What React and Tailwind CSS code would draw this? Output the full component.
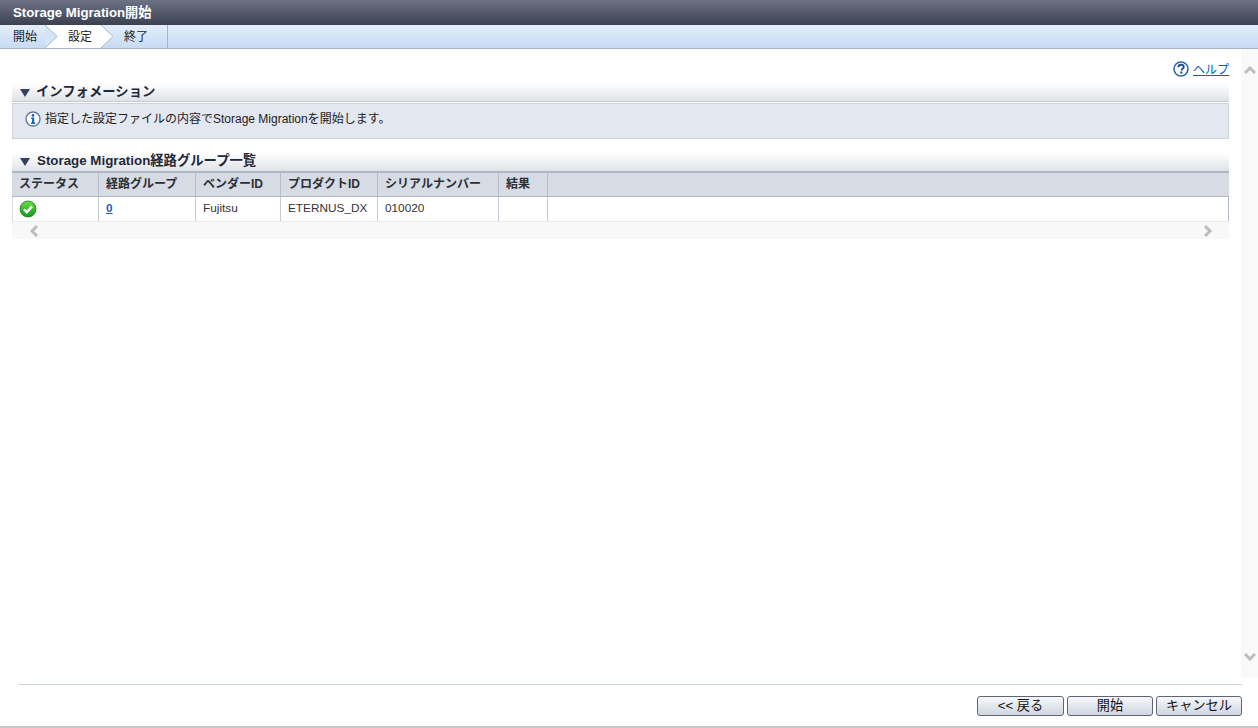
const font = "font-['Liberation_Sans','Noto_Sans_CJK_JP',sans-serif]";

function SectionHeader({ children, textGap, line, lift }) {
  return (
    <div className={`flex h-[18px] shrink-0 items-center bg-gradient-to-b from-white to-[#dfe2e7] pl-[8px] text-[13.33px] font-bold leading-[18px] text-[#1f2937] ${line ? "box-content border-b border-[#c6cad0]" : ""} ${lift ? "pb-[2px]" : ""}`}>
      <svg width="10" height="8" viewBox="0 0 10 8" className="mt-[1px]" style={{ marginRight: textGap }}>
        <path d="M0 0h10L5 8z" fill="#33415c" />
      </svg>
      <span>{children}</span>
    </div>
  );
}

function Arrow({ fromActive, toActive }) {
  return (
    <svg width="12" height="23" viewBox="0 0 12 23" className="block shrink-0">
      <rect width="12" height="23" fill={toActive ? "#fff" : "transparent"} />
      <path d="M0 0L12 11.5L0 23z" fill={fromActive ? "#fff" : "#d6e5f6"} />
      <path d="M0 0L12 11.5L0 23" fill="none" stroke="#a9b7c6" strokeWidth="1" />
    </svg>
  );
}

function Th({ w, children, grow }) {
  return (
    <div
      className={`flex h-full shrink-0 items-center border-r border-[#b4bdca] pb-[2px] pl-[7px] text-[12px] font-bold text-[#2b2f36] ${grow ? "grow border-r-0" : ""}`}
      style={grow ? undefined : { width: w }}
    >
      {children}
    </div>
  );
}

function Td({ w, children, grow }) {
  return (
    <div
      className={`flex h-full shrink-0 items-center border-r border-[#c4cbd6] pl-[7px] text-[11.8px] text-[#333] ${grow ? "grow border-r-0" : ""}`}
      style={grow ? undefined : { width: w }}
    >
      {children}
    </div>
  );
}

function Btn({ w, children }) {
  return (
    <button
      className="flex h-[20px] items-center justify-center rounded-[3px] border border-[#5d6678] bg-gradient-to-b from-[#f7f8fa] to-[#cfd6e0] pb-[1px] text-[13.2px] leading-none text-[#111]"
      style={{ width: w }}
    >
      {children}
    </button>
  );
}

export default function App() {
  const cols = [87, 97, 85, 97, 121, 49];
  return (
    <div className={`flex h-[728px] w-full flex-col overflow-hidden bg-white ${font}`}>
      {/* title */}
      <div className="flex h-[25px] shrink-0 items-center bg-gradient-to-b from-[#6e7486] to-[#3b4150] pl-[13px] text-[13.2px] font-bold text-white">
        Storage Migration開始
      </div>

      {/* wizard steps */}
      <div className="flex h-[24px] shrink-0 border-b border-[#a9b4c2] bg-gradient-to-b from-[#e4eefa] to-[#c6dbf3]">
        <div className="flex h-[23px] w-[45px] items-center pl-[13px] text-[12px] text-[#222]">開始</div>
        <Arrow toActive />
        <div className="flex h-[23px] w-[44px] items-center bg-white pl-[11px] text-[12px] text-[#222]">設定</div>
        <Arrow fromActive />
        <div className="flex h-[23px] w-[55px] items-center border-r border-[#a9b4c2] pl-[11px] text-[12px] text-[#222]">終了</div>
      </div>

      {/* body */}
      <div className="flex min-h-0 grow">
        <div className="flex min-w-0 grow flex-col pl-[12px] pr-[12px]">
          <div className="flex h-[34px] shrink-0 items-end justify-end gap-[4px] pb-[6px]">
            <svg width="16" height="16" viewBox="0 0 16 16">
              <circle cx="8" cy="8" r="7" fill="#fff" stroke="#2f66ad" strokeWidth="1.6" />
              <path d="M5.4 6.2C5.4 4.6 6.5 3.7 8.1 3.7s2.6 .9 2.6 2.2c0 1.9-2.2 1.9-2.2 3.6" fill="none" stroke="#1f4f95" strokeWidth="1.9" />
              <rect x="7.3" y="10.5" width="2.1" height="2.1" fill="#1f4f95" />
            </svg>
            <a className="text-[12px] leading-[14px] text-[#0b5cc0] underline">ヘルプ</a>
          </div>

          <SectionHeader textGap={6} line>インフォメーション</SectionHeader>
          <div className="mt-[1px] flex h-[36px] shrink-0 items-center gap-[4px] border border-[#cfd2d6] bg-[#e3e7ef] pb-[4px] pl-[12px] text-[12px] text-[#222]">
            <svg width="16" height="16" viewBox="0 0 16 16">
              <circle cx="8" cy="8" r="7" fill="#fff" stroke="#5f7a9f" strokeWidth="1.4" />
              <circle cx="8" cy="4.4" r="1.4" fill="#1766c2" />
              <path d="M6.2 6.6h3v5h1.1v1.3H5.9v-1.3h1.1V7.9h-.8z" fill="#1766c2" />
            </svg>
            <span>指定した設定ファイルの内容でStorage Migrationを開始します。</span>
          </div>

          <div className="mt-[14px]">
            <SectionHeader textGap={7} lift>Storage Migration経路グループ一覧</SectionHeader>
          </div>
          <div className="flex h-[26px] shrink-0 items-center border-t-2 border-b border-[#aeb7c4] bg-[#d6dbe4]">
            <Th w={cols[0]}>ステータス</Th>
            <Th w={cols[1]}>経路グループ</Th>
            <Th w={cols[2]}>ベンダーID</Th>
            <Th w={cols[3]}>プロダクトID</Th>
            <Th w={cols[4]}>シリアルナンバー</Th>
            <Th w={cols[5]}>結果</Th>
            <Th grow />
          </div>
          <div className="flex h-[24px] shrink-0 items-center border-x border-l-[#d8dce3] border-r-[#b4bccb] bg-white">
            <Td w={cols[0] - 1}>
              <svg width="18" height="18" viewBox="0 0 18 18" className="ml-[-1px]">
                <defs>
                  <linearGradient id="ok" x1="0" y1="0" x2="0" y2="1">
                    <stop offset="0" stopColor="#6fdc4a" />
                    <stop offset="1" stopColor="#0e9a1e" />
                  </linearGradient>
                </defs>
                <circle cx="9" cy="9" r="8" fill="url(#ok)" stroke="#0f7f1c" strokeWidth="0.8" />
                <path d="M5 9.2l2.8 3L13 6.4" fill="none" stroke="#fff" strokeWidth="2.4" />
              </svg>
            </Td>
            <Td w={cols[1]}>
              <a className="font-bold text-[#1c5fb8] underline">0</a>
            </Td>
            <Td w={cols[2]}>Fujitsu</Td>
            <Td w={cols[3]}>ETERNUS_DX</Td>
            <Td w={cols[4]}>010020</Td>
            <Td w={cols[5]} />
            <Td grow />
          </div>
          <div className="flex h-[18px] shrink-0 items-center justify-between border-t border-[#ececec] bg-[#f8f8f8] pl-[17px] pr-[16px]">
            <svg width="10" height="12" viewBox="0 0 10 12">
              <path d="M8 1L3 6l5 5" fill="none" stroke="#bdbdbd" strokeWidth="3" />
            </svg>
            <svg width="10" height="12" viewBox="0 0 10 12">
              <path d="M2 1l5 5-5 5" fill="none" stroke="#bdbdbd" strokeWidth="3" />
            </svg>
          </div>
        </div>

        {/* vertical scrollbar */}
        <div className="flex w-[17px] shrink-0 flex-col items-center justify-between bg-[#f9f9f9] pb-[16px] pt-[17px]">
          <svg width="12" height="9" viewBox="0 0 12 9">
            <path d="M1 7l5-5 5 5" fill="none" stroke="#bdbdbd" strokeWidth="3" />
          </svg>
          <svg width="12" height="9" viewBox="0 0 12 9">
            <path d="M1 2l5 5 5-5" fill="none" stroke="#bdbdbd" strokeWidth="3" />
          </svg>
        </div>
      </div>

      {/* footer */}
      <div className="mt-[7px] flex h-[42px] shrink-0 flex-col pl-[18px] pr-[16px]">
        <div className="border-t border-[#c9d6d6]" />
        <div className="flex justify-end gap-[3px] pt-[11px]">
          <Btn w={87}>&lt;&lt; 戻る</Btn>
          <Btn w={86}>開始</Btn>
          <Btn w={86}>キャンセル</Btn>
        </div>
      </div>
      <div className="h-[2px] shrink-0 bg-[#c8c8c8]" />
    </div>
  );
}
